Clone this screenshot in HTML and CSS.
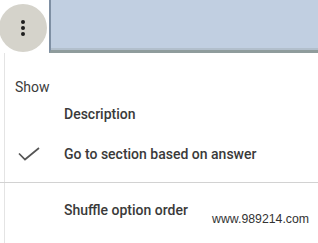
FILE: index.html
```html
<!DOCTYPE html>
<html>
<head>
<meta charset="utf-8">
<link rel="stylesheet" href="styles.css">
</head>
<body>
<div class="page">
  <div class="topbar">
    <div class="btn-cell">
      <div class="circle">
        <span class="dot"></span><span class="dot"></span><span class="dot"></span>
      </div>
    </div>
    <div class="blue"></div>
  </div>
  <div class="menu">
    <div class="label">Show</div>
    <div class="item item-desc"><span class="icon"></span><span class="text">Description</span></div>
    <div class="item item-go">
      <span class="icon">
        <svg width="22" height="14" viewBox="0 0 22 14"><path d="M1 6.5 L7 12.5 L21 1" fill="none" stroke="#555" stroke-width="1.7"/></svg>
      </span>
      <span class="text">Go to section based on answer</span>
    </div>
    <div class="divider"></div>
    <div class="item item-shuffle"><span class="icon"></span><span class="text">Shuffle option order</span></div>
    <div class="watermark">www.989214.com</div>
  </div>
</div>
</body>
</html>
```
FILE: styles.css
```css
html, body {
  margin: 0;
  padding: 0;
  background: #fff;
  overflow: hidden;
}
.page {
  width: 318px;
  height: 243px;
  font-family: Roboto, "Liberation Sans", sans-serif;
  position: relative;
}
.topbar {
  display: flex;
  height: 53px;
}
.btn-cell {
  width: 49px;
  background: #fff;
  flex: none;
  display: flex;
  align-items: flex-end;
}
.circle {
  width: 48px;
  height: 48px;
  border-radius: 50%;
  background: #d5d3cb;
  margin-left: -1px;
  margin-bottom: 1px;
  display: flex;
  flex-direction: column;
  align-items: center;
  justify-content: center;
  gap: 2px;
}
.dot {
  width: 4px;
  height: 4px;
  border-radius: 50%;
  background: #1e1e1e;
}
.blue {
  flex: 1;
  background: #c1cfe1;
  border-left: 2px solid #7e8fa3;
  border-bottom: 3px solid #8f9c9c;
  box-shadow: inset 0 -2px 0 #b2bfcc;
}
.menu {
  position: relative;
  height: 190px;
  border-left: 1px solid #e4e4e4;
  margin-left: 4px;
  display: flex;
  flex-direction: column;
}
.label {
  margin-top: 24px;
  line-height: 20px;
  height: 20px;
  padding-left: 10px;
  font-size: 14px;
  color: #3c3c3c;
}
.item {
  display: flex;
  align-items: center;
  height: 34px;
}
.icon {
  width: 59px;
  flex: none;
  display: flex;
  padding-left: 13px;
  box-sizing: border-box;
}
.text {
  font-size: 14px;
  font-weight: 500;
  color: #3a3a3a;
}
.item-go {
  margin-top: 6px;
}
.divider {
  height: 1px;
  background: #d2d2d2;
  margin-top: 11px;
  margin-left: -5px;
}
.item-shuffle {
  margin-top: 10px;
}
.watermark {
  position: absolute;
  left: 207px;
  top: 159px;
  font-family: "Liberation Sans", Arial, sans-serif;
  font-size: 12.3px;
  color: #333;
}
```
